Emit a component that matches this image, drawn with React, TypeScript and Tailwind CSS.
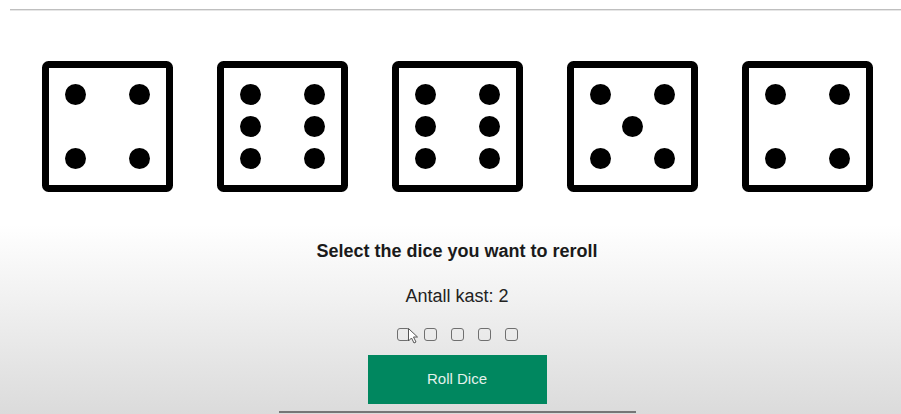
import React from 'react';

const pipSets: Record<number, [number, number][]> = {
  4: [[33, 33], [97, 33], [33, 97], [97, 97]],
  5: [[33, 33], [97, 33], [65, 65], [33, 97], [97, 97]],
  6: [[33, 33], [97, 33], [33, 65], [97, 65], [33, 97], [97, 97]],
};

function Die({ value }: { value: number }) {
  return (
    <svg width="131" height="131" viewBox="0 0 131 131" className="block">
      <rect x="3.5" y="3.5" width="124" height="124" rx="3" fill="#fff" stroke="#000" strokeWidth="7" />
      {pipSets[value].map(([cx, cy], i) => (
        <circle key={i} cx={cx + 0.5} cy={cy + 0.5} r="10.5" fill="#000" />
      ))}
    </svg>
  );
}

export default function App() {
  const dice = [4, 6, 6, 5, 4];

  return (
    <div className="relative h-[414px] w-[901px] overflow-hidden bg-[linear-gradient(to_bottom,#ffffff_0px,#ffffff_225px,#dbdbdb_414px)] font-['Liberation_Sans',Arial,sans-serif]">
      {/* top rule */}
      <div className="pt-[9px] pl-[10px]">
        <div className="h-[2px] border-t border-[#bfbfbf] border-b border-b-[#e6e6e6]" />
      </div>

      <div className="flex flex-col items-center pl-[13px]">
        <div className="mt-[50px] flex gap-[44px]">
          {dice.map((d, i) => (
            <Die key={i} value={d} />
          ))}
        </div>

        <h2 className="mt-[49px] text-[18px] leading-[20px] font-bold text-[#1a1a1a]">
          Select the dice you want to reroll
        </h2>

        <p className="mt-[25px] text-[18px] leading-[20px] text-[#222]">Antall kast: 2</p>

        <div className="mt-[22px] flex gap-[14px]">
          {dice.map((_, i) => (
            <input
              key={i}
              type="checkbox"
              className="m-0 block h-[13px] w-[13px] appearance-none rounded-[3px] border border-[#6f6f6f] bg-transparent"
            />
          ))}
        </div>

        <button className="mt-[14px] h-[49px] w-[179px] bg-[#00875f] text-[15px] text-[#e4f1ec]">
          Roll Dice
        </button>

        <div className="mt-[7px] h-[3px] w-[357px] border-t-2 border-[#767676]" />
      </div>

      {/* mouse cursor */}
      <svg className="absolute left-[408px] top-[328px]" width="11" height="16" viewBox="0 0 11 16">
        <path d="M0.5 0.5 L0.5 13 L3.5 10 L6 15 L8 14 L5.5 9 L9.5 9 Z" fill="#fff" stroke="#555" strokeWidth="1" strokeLinejoin="round" />
      </svg>
    </div>
  );
}
